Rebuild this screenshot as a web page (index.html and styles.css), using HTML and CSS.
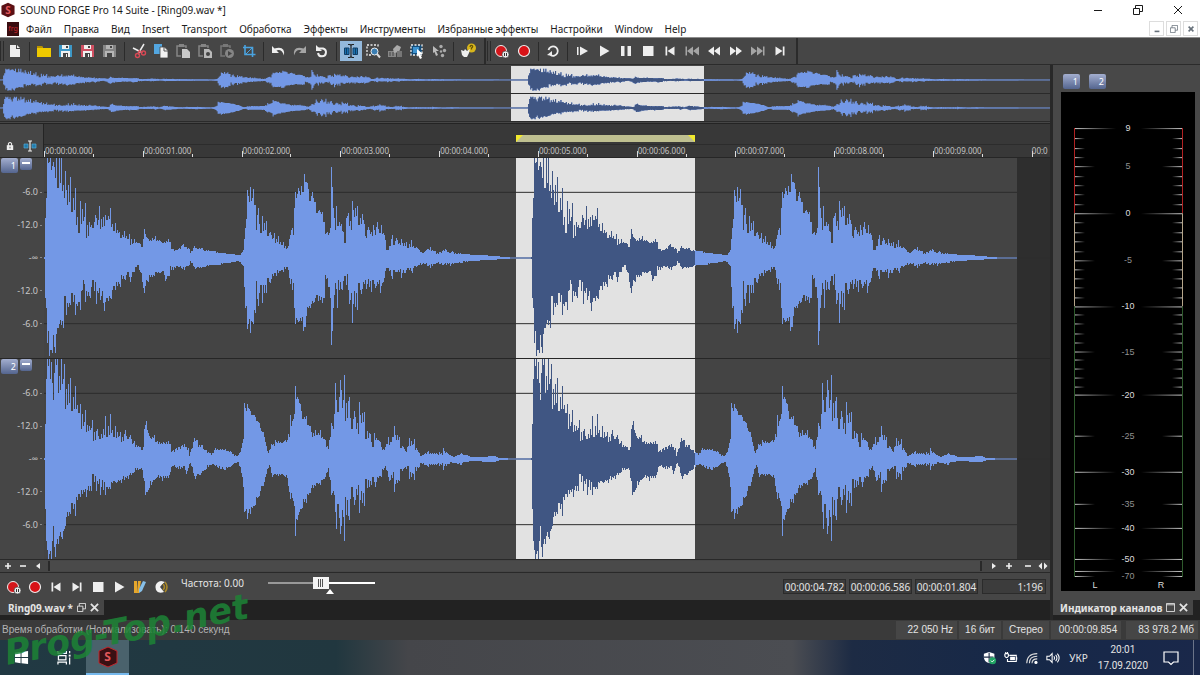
FILE: index.html
```html
<!DOCTYPE html>
<html lang="ru">
<head>
<meta charset="utf-8">
<title>SOUND FORGE Pro 14 Suite - [Ring09.wav *]</title>
<link rel="stylesheet" href="styles.css">
</head>
<body>
<svg class="defs" aria-hidden="true">
  <symbol id="i-new" viewBox="0 0 16 16"><path fill="currentColor" d="M3 2h6v4h4v8H3zM10 2l3 3h-3z"/></symbol>
  <symbol id="i-open" viewBox="0 0 16 16"><path fill="#f0ca00" d="M1 3h5l1 2h8v9H1z"/><path fill="#b99300" d="M1 3h5l1 2H1z"/></symbol>
  <symbol id="i-save" viewBox="0 0 16 16"><path fill="currentColor" d="M1 2h13v12H1z"/><path fill="#f0f0f0" d="M4 2h7v4H4zM3 8h9v6H3z"/><path fill="#444" d="M8 3h2v2H8zM5 10h5v4H5z"/><path fill="#f0f0f0" d="M8 11h1v3H8z"/></symbol>
  <symbol id="i-saveg" viewBox="0 0 16 16"><path fill="#858585" d="M1 2h13v12H1z"/><path fill="#b5b5b5" d="M4 2h7v4H4zM3 8h9v6H3z"/><path fill="#444" d="M8 3h2v2H8zM5 10h5v4H5z"/></symbol>
  <symbol id="i-cut" viewBox="0 0 16 16"><path d="M2 5l8 4M13 1 7 11" fill="none" stroke="#eee" stroke-width="1.500"/><path d="M7 8l5 1.500M9 7l-2 4" stroke="#d84854" stroke-width="1.300"/><circle cx="6.500" cy="12.500" r="2" fill="none" stroke="#d84854" stroke-width="1.400"/><circle cx="12.500" cy="10" r="2" fill="none" stroke="#d84854" stroke-width="1.400"/></symbol>
  <symbol id="i-copy" viewBox="0 0 16 16"><path fill="#53a6e0" d="M1 1h8v10H1z"/><path fill="#f2f2f2" stroke="#444" stroke-width=".8" d="M7 4h4.500l3.500 3.500V15H7z"/><path d="M11 4v4h4" fill="none" stroke="#555"/></symbol>
  <symbol id="i-paste" viewBox="0 0 16 16"><path fill="none" stroke="#858585" stroke-width="1.500" d="M6 13H2V3h9v2"/><path fill="#858585" d="M4 1h5v3H4z"/><path fill="#c9c9c9" d="M7 6h5l3 3v6H7z"/></symbol>
  <symbol id="i-pastem" viewBox="0 0 16 16"><path fill="none" stroke="#858585" stroke-width="1.500" d="M6 13H2V3h9v2"/><path fill="#858585" d="M4 1h5v3H4z"/><path fill="#b9b9b9" d="M7 6h5l3 3v6H7z"/><circle cx="11" cy="11" r="2" fill="#444"/></symbol>
  <symbol id="i-pastep" viewBox="0 0 16 16"><path fill="none" stroke="#777" stroke-width="1.500" d="M6 13H2V3h9v2"/><path fill="#777" d="M4 1h5v3H4z"/><circle cx="10.500" cy="10.500" r="4.500" fill="#858585"/><path fill="#444" d="M9 8l4 2.500L9 13z"/></symbol>
  <symbol id="i-crop" viewBox="0 0 16 16"><path fill="none" stroke="#4aa3e0" stroke-width="1.600" d="M4 2v9.500h10.500M2 4.500h9.500V14"/><path stroke="#4aa3e0" stroke-width="1" d="M5 11l6-6"/></symbol>
  <symbol id="i-undo" viewBox="0 0 16 16"><path fill="currentColor" d="M2 3v7h7L6.500 7.500q5-2 7.500 5 1.500-10-9.500-7z"/></symbol>
  <symbol id="i-redo" viewBox="0 0 16 16"><path fill="currentColor" d="M14 3v7H7l2.500-2.500Q4.500 5.500 2 12.500q-1.500-10 9.500-7z"/></symbol>
  <symbol id="i-again" viewBox="0 0 16 16"><path fill="none" stroke="currentColor" stroke-width="2" d="M4 5.500h5a4 4 0 1 1-5 4.500"/><path fill="currentColor" d="M2 2v6h6z"/></symbol>
  <symbol id="i-edit" viewBox="0 0 20 16"><path fill="#1c72b0" stroke="#123f66" d="M3.500 5H8v6.500H3.500zM12 5h4.500v6.500H12z"/><path stroke="#123f66" d="M5.500 5v7M14.500 5v7"/><path fill="none" stroke="#222" stroke-width="1.200" d="M7 1.500h2l1 1 1-1h2M10 2v12M7 14.500h2l1-1 1 1h2"/></symbol>
  <symbol id="i-mag" viewBox="0 0 16 16"><path fill="none" stroke="#eee" stroke-width="1.300" stroke-dasharray="2 1.500" d="M6 12H2V2h11v3"/><circle cx="9.500" cy="8.500" r="3.500" fill="#3b7eb2" stroke="#eee"/><path stroke="#ddd" stroke-width="2" d="m12 11 3 3.500"/></symbol>
  <symbol id="i-pen" viewBox="0 0 16 16"><path fill="#888" d="M1 8h8v6H1z"/><path fill="#aaa" d="m6 6 4-4 4 2-2 5-5 1z"/><path fill="#777" d="M10 8h5v6h-5z"/><path stroke="#444" d="M3 9v4M6 9v4"/></symbol>
  <symbol id="i-event" viewBox="0 0 16 16"><path fill="#174d78" stroke="#eee" stroke-width="1.300" stroke-dasharray="2 1.500" d="M2 2h11v10H2z"/><path fill="#3d93d0" d="M4 4h6v6H4z"/><path fill="#fff" d="m8 6 6 5h-3l2 4-2 1-2-4-1 2z"/></symbol>
  <symbol id="i-env" viewBox="0 0 16 16"><path fill="#bbb" d="M2 3l6 5H5l2 4-2 1-1.500-4L2 10z"/><g fill="#aaa"><circle cx="10" cy="3.500" r="1.700"/><circle cx="13.500" cy="7.500" r="1.700"/><circle cx="11.500" cy="12.500" r="1.700"/><circle cx="10" cy="8.500" r="1.200"/></g></symbol>
  <symbol id="i-help" viewBox="0 0 16 16"><circle cx="11.500" cy="5" r="4.500" fill="#d7b51c"/><path fill="none" stroke="#665400" stroke-width="1.300" d="M10 4q.5-2 2-1.500 1.500 1-.5 2.500v1.500"/><path fill="#eee" d="m1 7 3 1 1-2 2 2 3-2-1 4-2 4H4L2 12z"/></symbol>
  <symbol id="i-recp" viewBox="0 0 16 16"><circle cx="7" cy="8" r="5.500" fill="#d4161b" stroke="#eee"/><circle cx="11.500" cy="11.500" r="3.500" fill="#eee" stroke="#444" stroke-width=".7"/><path stroke="#333" d="M10.500 10v3M12.500 10v3"/></symbol>
  <symbol id="i-rec" viewBox="0 0 16 16"><circle cx="8" cy="8" r="5.500" fill="#d91217" stroke="#eee" stroke-width="1.200"/></symbol>
  <symbol id="i-loop" viewBox="0 0 16 16"><path fill="none" stroke="currentColor" stroke-width="1.800" d="M3.500 7a4.700 4.700 0 1 1 2 5"/><path fill="currentColor" d="M2 12l5-4v5z"/></symbol>
  <symbol id="i-playall" viewBox="0 0 16 16"><path fill="currentColor" d="M3 4h1.500v8H3zM6 3.500 14 8l-8 4.500z"/></symbol>
  <symbol id="i-play" viewBox="0 0 16 16"><path fill="currentColor" d="M4 2.500 13.500 8 4 13.500z"/></symbol>
  <symbol id="i-pause" viewBox="0 0 16 16"><path fill="currentColor" d="M3 3h3.500v10H3zM9.500 3H13v10H9.500z"/></symbol>
  <symbol id="i-stop" viewBox="0 0 16 16"><path fill="currentColor" d="M3 3h10.500v10H3z"/></symbol>
  <symbol id="i-start" viewBox="0 0 16 16"><path fill="currentColor" d="M3.500 3.500h1.700v9H3.500zM12.500 3.500v9L5.500 8z"/></symbol>
  <symbol id="i-end" viewBox="0 0 16 16"><path fill="currentColor" d="M10.800 3.500h1.700v9h-1.700zM3.500 3.500v9l7-4.500z"/></symbol>
  <symbol id="i-prev" viewBox="0 0 16 16"><path fill="currentColor" d="M1.500 3.500H3v9H1.500zM9 3.500v9L3 8zM15 3.500v9L9 8z"/></symbol>
  <symbol id="i-next" viewBox="0 0 16 16"><path fill="currentColor" d="M13 3.500h1.500v9H13zM7 3.500v9L13 8zM1 3.500v9L7 8z"/></symbol>
  <symbol id="i-rew" viewBox="0 0 16 16"><path fill="currentColor" d="M8 3.500v9L2 8zM14 3.500v9L8 8z"/></symbol>
  <symbol id="i-ff" viewBox="0 0 16 16"><path fill="currentColor" d="M8 3.500v9L14 8zM2 3.500v9L8 8z"/></symbol>
  <symbol id="i-x" viewBox="0 0 10 10"><path fill="none" stroke="currentColor" d="m1 1 8 8M9 1 1 9"/></symbol>
  <symbol id="i-restore" viewBox="0 0 10 10"><path fill="none" stroke="currentColor" d="M.5 3.500h6v6h-6zM2.500 3.500v-3h7v6h-3"/></symbol>
  <symbol id="i-min" viewBox="0 0 10 10"><path stroke="currentColor" d="M1 5.500h8"/></symbol>
  <symbol id="i-hex" viewBox="0 0 22 22"><path fill="currentColor" d="M11 1l9 4v12l-9 4-9-4V5z"/></symbol>
</svg>

<header class="titlebar">
  <span class="logo"><svg><use href="#i-hex"/></svg><b>S</b></span>
  <h1>SOUND FORGE Pro 14 Suite - [Ring09.wav *]</h1>
  <div class="window-buttons">
    <button aria-label="Minimize"><svg><use href="#i-min"/></svg></button>
    <button aria-label="Restore"><svg><use href="#i-restore"/></svg></button>
    <button aria-label="Close"><svg><use href="#i-x"/></svg></button>
  </div>
</header>

<nav class="menubar">
  <span class="doc-icon">frg</span>
  <button>Файл</button><button>Правка</button><button>Вид</button><button>Insert</button><button>Transport</button><button>Обработка</button><button>Эффекты</button><button>Инструменты</button><button>Избранные эффекты</button><button>Настройки</button><button>Window</button><button>Help</button>
  <div class="doc-buttons">
    <button aria-label="Minimize document"><svg viewBox="0 0 10 10"><path d="M2 8h6" stroke="currentColor" stroke-width="2"/></svg></button>
    <button aria-label="Restore document"><svg><use href="#i-restore"/></svg></button>
    <button aria-label="Close document"><svg viewBox="0 0 10 10"><path d="m2 2 6 6M8 2 2 8" stroke="currentColor" stroke-width="2"/></svg></button>
  </div>
</nav>

<div class="toolbar">
  <div class="tools">
    <i class="grip"></i>
    <button aria-label="New"><svg><use href="#i-new"/></svg></button>
    <i class="sep"></i>
    <button aria-label="Open"><svg><use href="#i-open"/></svg></button>
    <button aria-label="Save" class="blue"><svg><use href="#i-save"/></svg></button>
    <button aria-label="Save as" class="red"><svg><use href="#i-save"/></svg></button>
    <button aria-label="Save all"><svg><use href="#i-saveg"/></svg></button>
    <i class="sep"></i>
    <button aria-label="Cut"><svg><use href="#i-cut"/></svg></button>
    <button aria-label="Copy"><svg><use href="#i-copy"/></svg></button>
    <button aria-label="Paste"><svg><use href="#i-paste"/></svg></button>
    <button aria-label="Paste mix"><svg><use href="#i-pastem"/></svg></button>
    <button aria-label="Paste play"><svg><use href="#i-pastep"/></svg></button>
    <button aria-label="Trim"><svg><use href="#i-crop"/></svg></button>
    <i class="sep"></i>
    <button aria-label="Undo"><svg><use href="#i-undo"/></svg></button>
    <button aria-label="Redo" class="dim"><svg><use href="#i-redo"/></svg></button>
    <button aria-label="Repeat"><svg><use href="#i-again"/></svg></button>
    <i class="sep"></i>
    <button aria-label="Edit tool" class="active"><svg><use href="#i-edit"/></svg></button>
    <button aria-label="Magnify tool"><svg><use href="#i-mag"/></svg></button>
    <button aria-label="Pencil tool"><svg><use href="#i-pen"/></svg></button>
    <button aria-label="Event tool"><svg><use href="#i-event"/></svg></button>
    <button aria-label="Envelope tool"><svg><use href="#i-env"/></svg></button>
    <i class="sep"></i>
    <button aria-label="What's this"><svg><use href="#i-help"/></svg></button>
  </div>
  <div class="tools">
    <i class="grip"></i>
    <button aria-label="Arm record"><svg><use href="#i-recp"/></svg></button>
    <button aria-label="Record"><svg><use href="#i-rec"/></svg></button>
    <i class="sep"></i>
    <button aria-label="Loop"><svg><use href="#i-loop"/></svg></button>
    <i class="sep"></i>
    <button aria-label="Play all"><svg><use href="#i-playall"/></svg></button>
    <button aria-label="Play"><svg><use href="#i-play"/></svg></button>
    <button aria-label="Pause"><svg><use href="#i-pause"/></svg></button>
    <button aria-label="Stop"><svg><use href="#i-stop"/></svg></button>
    <button aria-label="Go to start"><svg><use href="#i-start"/></svg></button>
    <button aria-label="Previous" class="dim"><svg><use href="#i-prev"/></svg></button>
    <button aria-label="Rewind"><svg><use href="#i-rew"/></svg></button>
    <button aria-label="Forward"><svg><use href="#i-ff"/></svg></button>
    <button aria-label="Next" class="dim"><svg><use href="#i-next"/></svg></button>
    <button aria-label="Go to end"><svg><use href="#i-end"/></svg></button>
  </div>
</div>

<main class="workspace">
  <section class="editor">
    <div class="overview">
      <svg class="overview-lane" data-channel="0" viewBox="0 0 1050 28" preserveAspectRatio="none"></svg>
      <svg class="overview-lane" data-channel="1" viewBox="0 0 1050 28" preserveAspectRatio="none"></svg>
    </div>

    <div class="timeline">
      <div class="timeline-corner">
        <svg viewBox="0 0 10 12"><path fill="#eee" d="M1 5h8v6H1z"/><path fill="none" stroke="#eee" stroke-width="1.300" d="M3 6V3q2-2.500 4 0v3"/><path stroke="#444" d="M5 7v2"/></svg>
        <svg class="wide" viewBox="0 0 14 12"><path fill="#217cad" stroke="#55a9d4" stroke-width=".7" d="M1 4h4v4H1zM9 4h4v4H9z"/><path fill="none" stroke="#eee" stroke-width="1.200" d="M5 1h4M7 1v10M5 11h4"/></svg>
      </div>
      <div class="timeline-body">
        <div class="loop-row">
          <svg viewBox="0 0 1006 20" preserveAspectRatio="none"><path fill="#bfc090" d="M472 11h179v7H472z"/><path fill="#f2ea2e" d="M472 11h7l-7 7zM651 11h-7l7 7z"/></svg>
        </div>
        <ol class="ruler">
          <li>00:00:00.000</li><li>00:00:01.000</li><li>00:00:02.000</li><li>00:00:03.000</li><li>00:00:04.000</li><li>00:00:05.000</li><li>00:00:06.000</li><li>00:00:07.000</li><li>00:00:08.000</li><li>00:00:09.000</li><li class="last">00:0</li>
        </ol>
      </div>
    </div>

    <div class="track">
      <div class="track-head">
        <button class="channel">1</button><button class="fold" aria-label="Collapse channel 1"></button>
        <ul class="levels"><li>-6.0</li><li>-12.0</li><li>-∞</li><li>-12.0</li><li>-6.0</li></ul>
      </div>
      <div class="track-wave"><svg data-channel="0" viewBox="0 0 1006 201" preserveAspectRatio="none"></svg></div>
    </div>
    <div class="track">
      <div class="track-head">
        <button class="channel">2</button><button class="fold" aria-label="Collapse channel 2"></button>
        <ul class="levels"><li>-6.0</li><li>-12.0</li><li>-∞</li><li>-12.0</li><li>-6.0</li></ul>
      </div>
      <div class="track-wave"><svg data-channel="1" viewBox="0 0 1006 201" preserveAspectRatio="none"></svg></div>
    </div>

    <div class="scroller">
      <button aria-label="Zoom in vertically"><svg viewBox="0 0 10 10"><path d="M5 2v6M2 5h6" stroke="currentColor" stroke-width="1.600"/></svg></button>
      <button aria-label="Zoom out vertically"><svg viewBox="0 0 10 10"><path d="M2 5h6" stroke="currentColor" stroke-width="1.600"/></svg></button>
      <button aria-label="Scroll left"><svg viewBox="0 0 10 10"><path d="M7 2v6L3 5z" fill="currentColor"/></svg></button>
      <div class="thumb"></div>
      <button aria-label="Scroll right"><svg viewBox="0 0 10 10"><path d="M3 2v6l4-3z" fill="currentColor"/></svg></button>
      <button aria-label="Zoom in"><svg viewBox="0 0 10 10"><path d="M5 2v6M2 5h6" stroke="currentColor" stroke-width="1.600"/></svg></button>
      <button class="spaced" aria-label="Zoom out"><svg viewBox="0 0 10 10"><path d="M2 5h6" stroke="currentColor" stroke-width="1.600"/></svg></button>
      <button aria-label="Fit"><svg viewBox="0 0 10 10"><path d="M4 1.500v7L.5 5zM6 1.500v7L9.500 5z" fill="currentColor"/></svg></button>
    </div>

    <div class="transport">
      <div class="transport-buttons">
        <button aria-label="Arm record"><svg><use href="#i-recp"/></svg></button>
        <button aria-label="Record"><svg><use href="#i-rec"/></svg></button>
        <button aria-label="Go to start"><svg><use href="#i-start"/></svg></button>
        <button aria-label="Go to end"><svg><use href="#i-end"/></svg></button>
        <button aria-label="Stop"><svg><use href="#i-stop"/></svg></button>
        <button aria-label="Play"><svg><use href="#i-play"/></svg></button>
        <button aria-label="Edit cuts"><svg viewBox="0 0 16 16"><path fill="#e6a72c" d="M2 2h3v12H2zM6 2h3l-2 12H5z"/><path fill="#87bfe8" d="m11 2 3 1-4 9-3 2V10z"/></svg></button>
        <button aria-label="Scrub"><svg viewBox="0 0 16 16"><path fill="#f2f2f2" d="M11 3 7 8l4 5Q5 15 3 11 1 5 6 2.500z"/><path fill="#f2f2f2" d="M12 3 8 2 6 3l3 2z"/><path d="M10 5q3 3 0 6M12 3q4 5 0 10" fill="none" stroke="#a98829" stroke-width="1.600"/></svg></button>
      </div>
      <label class="rate" for="rate">Частота: 0.00</label>
      <div class="rate-slider"><input id="rate" type="range" min="0" max="100" value="49"><i></i></div>
      <div class="times">
        <input aria-label="Selection start" value="00:00:04.782" readonly>
        <input aria-label="Selection end" value="00:00:06.586" readonly>
        <input aria-label="Selection length" value="00:00:01.804" readonly>
        <input aria-label="Zoom ratio" value="1:196" readonly>
      </div>
    </div>
    <div class="dock-tabs">
      <div class="dock-tab"><span>Ring09.wav *</span><button aria-label="Restore file"><svg><use href="#i-restore"/></svg></button><button aria-label="Close file"><svg class="bold"><use href="#i-x"/></svg></button></div>
    </div>
  </section>

  <aside class="meters">
    <div class="meters-body">
      <div class="meter-buttons"><button class="channel">1</button><button class="channel">2</button></div>
      <div class="meter"><svg id="meter" viewBox="0 0 134 498" preserveAspectRatio="none"></svg></div>
    </div>
    <div class="dock-tabs">
      <div class="dock-tab fill"><span>Индикатор каналов</span><button aria-label="Maximize panel"><svg viewBox="0 0 10 10"><path d="M.5 .5h9v9h-9zM.5 2h9" fill="none" stroke="currentColor"/></svg></button><button aria-label="Close panel"><svg class="bold"><use href="#i-x"/></svg></button></div>
    </div>
  </aside>
</main>

<footer class="status">
  <p>Время обработки (Нормализовать): 0.140 секунд</p>
  <span class="cell rate-cell">22 050 Hz</span><span class="cell">16 бит</span><span class="cell">Стерео</span><span class="cell time-cell">00:00:09.854</span><span class="cell size-cell">83 978.2 Мб</span>
</footer>

<div class="taskbar">
  <button class="task" aria-label="Start"><svg viewBox="0 0 16 16"><path fill="#fff" d="m1 3 6-1v5.500H1zM8 2l7-1v6.500H8zM1 8.500h6V14l-6-1zM8 8.500h7V15l-7-1z"/></svg></button>
  <button class="task" aria-label="Task view"><svg viewBox="0 0 16 16"><path fill="none" stroke="#fff" stroke-width="1.300" d="M1 1v2.500h9V1M1.500 6h8v4.500h-8zM1 15.500V13h9v2.500M13.500 1v2.500M13.500 8v7.500"/><path fill="#fff" d="M12.500 5h2v2h-2z"/></svg></button>
  <button class="task current" aria-label="SOUND FORGE Pro 14 Suite"><span class="logo big"><svg><use href="#i-hex"/></svg><b>S</b></span></button>
  <div class="tray">
    <svg viewBox="0 0 16 16"><path fill="#fff" d="M7 1l6 2v4q0 5-6 7-6-2-6-7V3z"/><path stroke="#21304a" stroke-width="1.300" d="M7 2v11M1 7h11"/><circle cx="11" cy="11" r="4" fill="#20a464"/><path d="m9 11 1.500 1.500L13 10" fill="none" stroke="#fff"/></svg>
    <svg viewBox="0 0 16 16"><path fill="none" stroke="#fff" stroke-width="1.300" d="M6 5h8v7H4V9M1 3h4M1 3v3q2 3 4 0V3M2 1v2M4 1v2M14.500 7v3"/><path fill="#fff" d="M7 6.500h5.500v4H7z"/></svg>
    <svg viewBox="0 0 16 16"><path fill="none" stroke="#ddd" stroke-width="1.200" d="M2 14Q2 3 14 3M5 14Q5 6 14 6M8 14Q8 9 14 9"/><circle cx="12.500" cy="13" r="1.800" fill="#fff"/></svg>
    <svg viewBox="0 0 16 16"><path fill="none" stroke="#fff" stroke-width="1.200" d="M1 6h3l3-3v10l-3-3H1zM9 6q1.500 2 0 4M11 4.500q3 3.500 0 7M13 3q4 5 0 10"/></svg>
    <span class="lang">УКР</span>
    <time class="clock">20:01<br>17.09.2020</time>
    <svg class="note" viewBox="0 0 16 16"><path fill="none" stroke="#fff" stroke-width="1.200" d="M1 2h14v10h-4.500L8 14.500 5.500 12H1z"/></svg>
  </div>
</div>
<div class="watermark">Prog-Top.net</div>
<script src="wave.js"></script>
</body>
</html>
```

FILE: styles.css
```css
* { box-sizing: border-box; }
body {
  margin: 0;
  height: 100vh;
  display: flex;
  flex-direction: column;
  position: relative;
  overflow: hidden;
  background: #242424;
  color: #e4e4e4;
  font: 10px/14px "Noto Sans", "Open Sans", sans-serif;
}
button {
  display: flex;
  align-items: center;
  justify-content: center;
  margin: 0;
  padding: 0;
  border: 0;
  background: none;
  color: inherit;
  font: inherit;
}
ol, ul { list-style: none; margin: 0; padding: 0; }
svg { display: block; }
.defs { position: absolute; width: 0; height: 0; }

.titlebar {
  flex: none;
  display: flex;
  align-items: center;
  height: 20px;
  padding-right: 2px;
  background: #fff;
  color: #1a1a1a;
}
.titlebar h1 { flex: 1; margin: 0 0 0 4px; font-size: 10px; font-weight: 400; }
.logo { display: grid; place-items: center; width: 16px; height: 16px; color: #5b1014; }
.logo svg, .logo b { grid-area: 1 / 1; }
.logo svg { width: 16px; height: 16px; }
.logo b { font-size: 10px; line-height: 10px; color: #e2575b; }
.window-buttons { display: flex; }
.window-buttons button { width: 40px; height: 20px; }
.window-buttons svg { width: 10px; height: 10px; }

.menubar {
  flex: none;
  display: flex;
  align-items: center;
  gap: 12px;
  height: 18px;
  padding: 0 2px 0 7px;
  background: #fff;
  color: #202020;
  border-bottom: 1px solid #8d8d8d;
}
.doc-icon {
  width: 12px;
  height: 14px;
  margin-right: -5px;
  background: #3a0d10;
  color: #c9282e;
  font-size: 7px;
  text-align: center;
}
.doc-buttons { display: flex; gap: 2px; margin-left: auto; }
.doc-buttons button { width: 15px; height: 15px; border: 1px solid #ddd; color: #66707a; }
.doc-buttons svg { width: 8px; height: 8px; }

.toolbar { flex: none; display: flex; height: 27px; background: #464646; border-bottom: 1px solid #2b2b2b; }
.tools { display: flex; align-items: center; padding-right: 5px; border-right: 2px solid #2b2b2b; color: #eee; }
.tools button { width: 22px; height: 20px; }
.tools svg { width: 16px; height: 16px; }
.tools .active { background: #94b9dc; }
.tools .active svg { width: 20px; }
.blue { color: #3d98c7; }
.red { color: #d05062; }
.tools .dim { color: #a5a5a5; }
.grip { width: 4px; height: 20px; border: solid #2b2b2b; border-width: 0 1px; }
.tools + .tools .grip { margin-left: 1px; }
.sep { width: 1px; height: 19px; margin: 0 3px; background: #2b2b2b; }

.workspace { flex: 1; display: flex; min-height: 0; }
.editor { flex: 1; display: flex; flex-direction: column; min-width: 0; background: #464646; }
.overview { flex: none; height: 59px; padding-top: 1px; border-bottom: 1px solid #242424; }
.overview-lane { width: 100%; height: 28px; background: #444; border-bottom: 1px solid #2a2a2a; }

.timeline { flex: none; display: flex; height: 33px; }
.timeline-corner { display: flex; align-items: flex-end; gap: 9px; width: 44px; padding: 0 6px 5px; border-right: 1px solid #242424; background: #464646; }
.timeline-corner svg { width: 8px; height: 12px; flex: none; }
.timeline-corner .wide { width: 14px; }
.timeline-body { flex: 1; min-width: 0; background: #383838; }
.loop-row svg { width: 100%; height: 20px; }
.ruler { display: flex; height: 13px; overflow: hidden; border-top: 1px solid #2c2c2c; }
.ruler li {
  flex: 0 0 9.82%;
  padding-left: 1px;
  color: #c4c4c4;
  font-size: 8px;
  line-height: 11px;
  background: linear-gradient(#ddd, #ddd) 0 100% / 1px 6px no-repeat, linear-gradient(#ddd, #ddd) 50% 100% / 1px 3px no-repeat;
}
.ruler .last { flex: 1 1 0; padding: 0; background: linear-gradient(#ddd, #ddd) 0 100% / 1px 6px no-repeat; }

.track { flex: 1; display: flex; min-height: 0; border-top: 1px solid #262626; }
.track-head { display: grid; grid-template: 18px 1fr / 18px 25px; column-gap: 1px; width: 44px; flex: none; padding-left: 1px; }
.channel { width: 17px; height: 15px; padding-right: 2px; justify-content: flex-end; border-radius: 2px; background: linear-gradient(#a3aecf, #54658f); color: #fff; font-size: 9px; }
.fold { width: 12px; height: 12px; border-radius: 2px; background: linear-gradient(#a3aecf, #54658f); align-items: flex-start; padding-top: 4px; }
.fold::before { content: ""; width: 8px; height: 2px; background: #fff; }
.levels { grid-column: 1 / 3; display: flex; flex-direction: column; padding-bottom: 18px; text-align: right; font-size: 9px; color: #c8c8c8; }
.levels li { flex: 1; display: flex; align-items: center; justify-content: flex-end; padding-right: 3px; }
.levels li::after { content: ""; width: 2px; height: 1px; margin-left: 2px; background: #888; }
.track-wave { flex: 1; min-width: 0; display: flex; }
.track-wave svg { flex: 1; width: 100%; height: 100%; }

.file-bg { fill: #444; }
.void { fill: #2e2e2e; }
.selected { fill: #e2e2e2; }
.wave { fill: #7398e6; }
.wave-selected { fill: #405683; }
.zero { stroke: #7398e6; }
.zero-selected { stroke: #405683; }
.guide { stroke: #2c2c2c; }

.scroller { flex: none; display: flex; align-items: center; height: 14px; border: solid #292929; border-width: 1px 0; }
.scroller button { width: 15px; height: 12px; color: #eee; }
.scroller svg { width: 10px; height: 10px; }
.scroller .thumb { flex: 1; height: 10px; margin: 0 4px 0 3px; border: solid #292929; border-width: 0 2px; background: #4a4a4a; }
.scroller .spaced { margin-left: 4px; }

.transport { flex: none; display: flex; align-items: center; height: 27px; padding: 0 4px 0 3px; }
.transport-buttons { display: flex; }
.transport-buttons button { width: 21px; height: 20px; color: #eee; }
.transport-buttons svg { width: 16px; height: 16px; }
.rate { margin: 0 24px 7px 10px; }
.rate-slider { position: relative; width: 107px; height: 27px; }
.rate-slider input { -webkit-appearance: none; appearance: none; width: 100%; height: 12px; margin: 4px 0 0; background: linear-gradient(90deg, #999 50%, #fff 50%) 0 50% / 100% 2px no-repeat; }
.rate-slider input::-webkit-slider-thumb { -webkit-appearance: none; width: 16px; height: 12px; background: linear-gradient(90deg, #555 1px, transparent 1px 2px, #555 2px 3px, transparent 3px 4px, #555 4px) 50% 50% / 5px 8px no-repeat #f4f4f4; }
.rate-slider i { position: absolute; left: 58px; top: 16px; border: solid transparent; border-width: 0 4px 5px; border-bottom-color: #fff; }
.times { display: flex; gap: 3px; margin-left: auto; }
.times input { width: 63px; height: 15px; padding: 0; border: 1px solid #2b2b2b; background: #3c3c3c; color: #e4e4e4; font: inherit; text-align: center; }
.times input:last-child { width: 64px; margin-left: 1px; padding-right: 2px; text-align: right; }

.dock-tabs { flex: none; height: 20px; background: #222; }
.dock-tab { display: flex; align-items: center; gap: 4px; width: 104px; height: 15px; padding: 0 4px 0 8px; background: #464646; font-weight: 700; white-space: nowrap; }
.dock-tab svg { width: 9px; height: 9px; }
.dock-tab .bold { stroke-width: 2px; }
.dock-tab.fill { width: auto; margin-right: 7px; padding-left: 7px; }

.meters { flex: none; display: flex; flex-direction: column; width: 150px; border-left: 3px solid #282828; }
.meters-body { flex: 1; min-height: 0; display: flex; flex-direction: column; padding: 9px 5px 9px 8px; background: #484848; }
.meter-buttons { display: flex; gap: 9px; padding-left: 2px; margin-bottom: 3px; }
.meter { flex: 1; min-height: 0; display: flex; background: #000; }
.meter svg { width: 100%; height: 100%; }
.meter-label { fill: #ddd; font-size: 9px; text-anchor: middle; font-family: "Liberation Sans", sans-serif; }
.meter-label.minor { fill: #909090; }

.status { flex: none; display: flex; align-items: center; gap: 2px; height: 20px; padding-right: 2px; background: #3a3a3a; font-family: "Liberation Sans", sans-serif; }
.status p { flex: 1; margin: 0 0 0 2px; color: #b4b4b4; }
.cell { height: 18px; line-height: 18px; padding: 0 6px; background: #464646; }
.rate-cell { padding: 0 4px 0 12px; }
.time-cell { padding: 0 4px 0 8px; margin-right: 3px; }
.size-cell { padding: 0 4px 0 12px; }

.taskbar { flex: none; display: flex; align-items: center; height: 35px; background: linear-gradient(90deg, #213943, #21373f 28%, #45464a 34%, #4b4d52 66%, #1d2b44 71%, #162848 85%, #1a284a); }
.task { width: 43px; height: 35px; }
.task svg { width: 15px; height: 15px; }
.task.current { background: #4a626c; border-bottom: 2px solid #76b9ed; }
.task .logo svg { width: 22px; height: 22px; }
.big { width: 22px; height: 22px; color: #3a1013; }
.big svg { stroke: #c2262d; }
.big b { font-size: 12px; line-height: 12px; }
.tray { display: flex; align-items: center; gap: 7px; margin-left: auto; margin-right: 6px; padding-right: 14px; height: 35px; border-right: 1px solid #6b7489; }
.tray svg { width: 14px; height: 14px; }
.lang { margin-left: 2px; }
.clock { margin-left: 3px; font-family: Roboto, sans-serif; line-height: 16px; text-align: center; }
.tray .note { width: 16px; height: 16px; margin-left: 8px; }

.watermark {
  position: absolute;
  left: 8px;
  bottom: 6px;
  color: #1d8436;
  opacity: 0.85;
  font: italic 700 35px/32px "DejaVu Sans", sans-serif;
  transform: rotate(-11deg);
  transform-origin: 0 100%;
  pointer-events: none;
}
```

FILE: wave.js
```js
// Envelope points of one ring: [time position, peak, dip that follows it].
const RINGS = [
  {
    up: [[0,1],[1,40],[2,60],[3,101,94],[6,101,88],[9,96,76],[12,101,70],[15,101,72],[17,101,60],[21,87,50],[26,81,46],[31,70,25],[36,57,32],[41,55,20],[45,36,30],[51,43,30],[55,52,29],[61,43,38],[66,50,27],[71,35,24],[75,26,20],[80,27,19],[85,24,12],[90,19,15],[95,15,11],[100,29,20],[104,19,17],[111,22,17],[116,17,15],[124,19,16],[127,9],[133,8],[139,14,11],[146,5],[150,12,9],[158,10,7],[171,7,5],[181,5,4],[191,3],[196,3],[199,8],[201,30],[203,68,55],[206,71,54],[209,69,53],[211,53,25],[214,50,25],[218,42,26],[222,37,22],[226,26,17],[230,25,15],[234,22,13],[239,16,9],[243,10],[247,28,18],[250,50],[251,66,60],[254,70,61],[257,72,66],[260,84,76],[264,69,57],[268,66,56],[271,56,45],[275,48,44],[278,46,36],[281,24],[283,26,22],[286,30],[287,91],[288,71],[289,50],[290,40,24],[292,52,32],[297,34,26],[299,26,15],[302,40],[304,45,28],[308,57,40],[313,52,33],[318,44,38],[321,22],[324,31,22],[329,33,22],[333,36,25],[337,33,24],[341,18,8],[344,8],[348,23,13],[352,20,13],[357,19,11],[362,16,10],[367,18,10],[374,9],[378,5],[382,8],[386,11,7],[392,4],[401,9,5],[408,7,4],[416,5,4],[426,3],[436,3],[451,2],[460,1],[472,0]],
    down: [[0,1],[1,40],[2,50],[3,85],[5,98,92],[8,95,75],[11,95,70],[14,70,62],[19,70,38],[22,57,44],[26,47,35],[31,57,44],[36,52,32],[39,22],[41,44,33],[46,40,22],[52,46,30],[56,42,32],[60,53,40],[64,43,38],[67,41,28],[71,32,23],[76,29,17],[81,22,14],[86,24,13],[90,14],[93,7],[96,14],[100,35,20],[104,24,17],[110,18,14],[116,15,13],[121,23,18],[125,18,8],[134,9],[140,12,8],[146,3],[151,11,9],[161,9,7],[176,7,5],[186,5],[194,3],[199,8],[201,50],[203,71,60],[206,75,61],[209,66,52],[211,55,20],[214,48,27],[218,45,25],[222,35,20],[226,25,15],[232,18,12],[239,14,9],[243,9],[246,26,20],[250,50],[251,66,60],[254,64,59],[259,73,70],[262,58,48],[266,50,43],[270,44,37],[274,43,38],[278,45,40],[281,17],[284,29,25],[286,40],[287,87],[288,73],[289,50],[290,37,21],[293,50,22],[298,32,18],[302,27,14],[305,46,35],[308,65,30],[313,52,25],[317,36,22],[322,31,20],[327,34,22],[331,30,22],[336,35,25],[340,20,10],[344,10],[348,21,12],[352,14,11],[357,20,12],[361,15,10],[368,15,8],[374,7],[381,6],[386,10,6],[392,5],[399,7,5],[406,8,5],[412,5],[418,5,3],[426,3],[446,2],[460,1],[472,0]]
  },
  {
    up: [[0,1],[1,35],[2,80],[3,101,92],[5,101,80],[7,97,55],[11,101,90],[13,101,66],[17,101,70],[20,95,50],[26,81,48],[31,73,46],[36,55,28],[41,49,27],[45,33,28],[48,39,18],[53,30,20],[57,25,20],[61,43,22],[66,45,22],[71,33,20],[76,27,17],[81,29,20],[86,24,14],[90,18,12],[96,12,9],[99,12],[100,30],[102,38,26],[105,23,20],[110,24,17],[113,18,15],[119,17,15],[124,18,15],[127,7],[132,11],[140,15,12],[145,3],[150,21,18],[153,19,12],[158,14,9],[162,9,6],[167,4],[171,11,9],[181,10,8],[188,5],[193,3],[196,7],[199,20],[200,56,48],[203,55,50],[206,48,44],[211,42,38],[216,31,28],[221,17],[224,6],[227,15,13],[231,19,16],[240,18,16],[244,25,22],[246,44,32],[249,40],[251,73,60],[254,60,56],[257,48,40],[262,43,33],[267,27,22],[271,29,24],[276,29,20],[281,19,12],[284,10],[287,36],[289,30,27],[291,76,47],[296,79,44],[300,84,38],[305,62,30],[310,48,25],[315,57,34],[320,47,20],[326,25,12],[330,26,18],[336,17,9],[340,9],[344,22,13],[347,17],[350,33,18],[355,22,11],[359,12,8],[362,7],[365,21,12],[370,20,9],[374,7],[377,3],[384,8,5],[392,6,4],[399,11,6],[404,5],[409,2],[417,6,4],[422,4],[427,2],[437,2],[450,3],[455,1],[472,0]],
    down: [[0,1],[1,50],[2,82],[4,101,92],[7,101,64],[11,98,80],[14,85,72],[18,80,70],[21,67,52],[26,55,44],[31,57,35],[36,38,30],[42,38,26],[47,32,15],[52,32,20],[56,36,20],[61,36,28],[66,30,22],[72,24,21],[77,24,17],[84,20,14],[90,13,9],[98,11],[101,36,33],[103,33],[107,26,20],[112,19,16],[118,22,17],[124,19],[128,7],[134,10,7],[142,15],[146,4],[151,20,15],[156,16,11],[162,10,6],[168,5],[174,9],[181,11,8],[188,6],[194,3],[198,18],[200,53,50],[203,60,50],[206,55,47],[211,46,38],[216,32,27],[221,18],[225,6],[228,18,15],[240,17,15],[244,27],[246,40,34],[249,42],[251,77,60],[254,56,50],[258,49,40],[262,44,34],[266,34,26],[271,27,24],[276,26,20],[281,18,14],[284,9],[287,36,32],[290,36],[292,70,45],[296,75,44],[300,82,38],[305,61,28],[310,46,26],[315,54,30],[320,47,20],[327,26,18],[331,28,17],[337,18,9],[341,7],[345,22,13],[350,33,20],[355,22,10],[360,9,7],[365,20,12],[370,21,8],[376,4],[384,8,5],[392,6,4],[399,11,5],[406,3],[417,6,3],[425,2],[450,3],[456,1],[472,0]]
  }
];
const RING_GAP = 487;
const FILE_LENGTH = 973;
const SELECTION = [472, 651];
const RIPPLE = [0, 0.5, 0.1, 0.7, 0.2, 0.4, 0];

function height(points, x) {
  for (let i = 1; i < points.length; i++) {
    if (x >= points[i][0]) continue;
    const [x0, peak, dip] = points[i - 1];
    const [x1, next] = points[i];
    if (x === x0) return peak;
    const along = (x - x0) / (x1 - x0);
    const level = peak + (next - peak) * along;
    if (dip === undefined) return level > 4 && x % 3 === 1 ? level * 0.8 : level;
    return dip + (level - dip) * RIPPLE[x % 7];
  }
  return 0;
}

function outline(channel, left, scaleX, middle, scaleY) {
  const { up, down } = RINGS[channel];
  let d = "";
  for (let x = 0; x < FILE_LENGTH; x++) {
    const t = x >= RING_GAP ? x - RING_GAP : x;
    const a = height(up, t) * scaleY;
    const b = height(down, t) * scaleY;
    const x0 = left + x * scaleX;
    d += `M${x0} ${middle - a}h${scaleX}V${middle + b}h${-scaleX}z`;
  }
  return d;
}

function drawTrack(svg) {
  const ch = Number(svg.dataset.channel);
  const d = outline(ch, 0, 1, 100.5, 1);
  const [a, b] = SELECTION;
  svg.innerHTML = `<defs><clipPath id="sel${ch}"><path d="M${a} 0H${b}V201H${a}z"/></clipPath></defs>
    <path class="file-bg" d="M0 0h${FILE_LENGTH}v201H0z"/><path class="void" d="M${FILE_LENGTH} 0h40v201h-40z"/>
    <path class="selected" d="M${a} 0H${b}V201H${a}z"/>
    <path class="guide" d="M0 34.5h${FILE_LENGTH}M0 166.5h${FILE_LENGTH}M${FILE_LENGTH} 100.5h40"/>
    <path class="zero" d="M0 100.5H${FILE_LENGTH}"/><path class="zero-selected" d="M${a} 100.5H${b}"/>
    <g shape-rendering="crispEdges"><path class="wave" d="${d}"/><path class="wave-selected" clip-path="url(#sel${ch})" d="${d}"/></g>`;
}

function drawOverview(svg) {
  const ch = Number(svg.dataset.channel);
  const d = outline(ch, 2, 1.078, 14.5, 0.115);
  svg.innerHTML = `<defs><clipPath id="osel${ch}"><path d="M511 0h193v28H511z"/></clipPath></defs>
    <path class="selected" d="M511 0h193v28H511z"/>
    <path class="zero" d="M0 14.5h1050"/><path class="zero-selected" d="M511 14.5h193"/>
    <path class="wave" d="${d}"/><path class="wave-selected" clip-path="url(#osel${ch})" d="${d}"/>`;
}

function drawMeter(svg) {
  const major = [[36,"9"],[121,"0"],[214,"-10"],[302,"-20"],[379,"-30"],[435,"-40"],[466,"-50"],[478,""]];
  const middle = [[74,"5"],[168,"-5"],[259,"-15"],[343,"-25"],[411,"-35"],[483,"-70"]];
  const minor = [46,56,65,84,93,102,112,130,140,149,159,177,186,195,205,222,231,241,250,267,276,285,294];
  let out = `<defs><linearGradient id="ml"><stop stop-color="#ccc"/><stop offset="1" stop-color="#000"/></linearGradient><linearGradient id="mr"><stop/><stop offset="1" stop-color="#ccc"/></linearGradient></defs>
    <g fill="none"><path stroke="#b02222" d="M13.5 36v85M121.5 36v85"/><path stroke="#b5a58a" d="M13.5 121v93M121.5 121v93"/><path stroke="#2e5a2c" d="M13.5 214v270M121.5 214v270"/></g>`;
  const tick = (y, w) => {
    out += `<rect x="14" y="${y}" width="${w}" height="1" fill="url(#ml)"/><rect x="${121 - w}" y="${y}" width="${w}" height="1" fill="url(#mr)"/>`;
  };
  const label = (x, y, s, cls) => { out += `<text class="meter-label ${cls}" x="${x}" y="${y}">${s}</text>`; };
  major.forEach(([y, s]) => { tick(y, 41); if (s) label(67, y + 3, s, ""); });
  middle.forEach(([y, s]) => { tick(y, 20); label(67, y + 3, s, "minor"); });
  minor.forEach(y => tick(y, 10));
  label(34, 495, "L", "");
  label(100, 495, "R", "");
  svg.innerHTML = out;
}

document.querySelectorAll(".track-wave svg").forEach(drawTrack);
document.querySelectorAll(".overview-lane").forEach(drawOverview);
drawMeter(document.getElementById("meter"));
```
